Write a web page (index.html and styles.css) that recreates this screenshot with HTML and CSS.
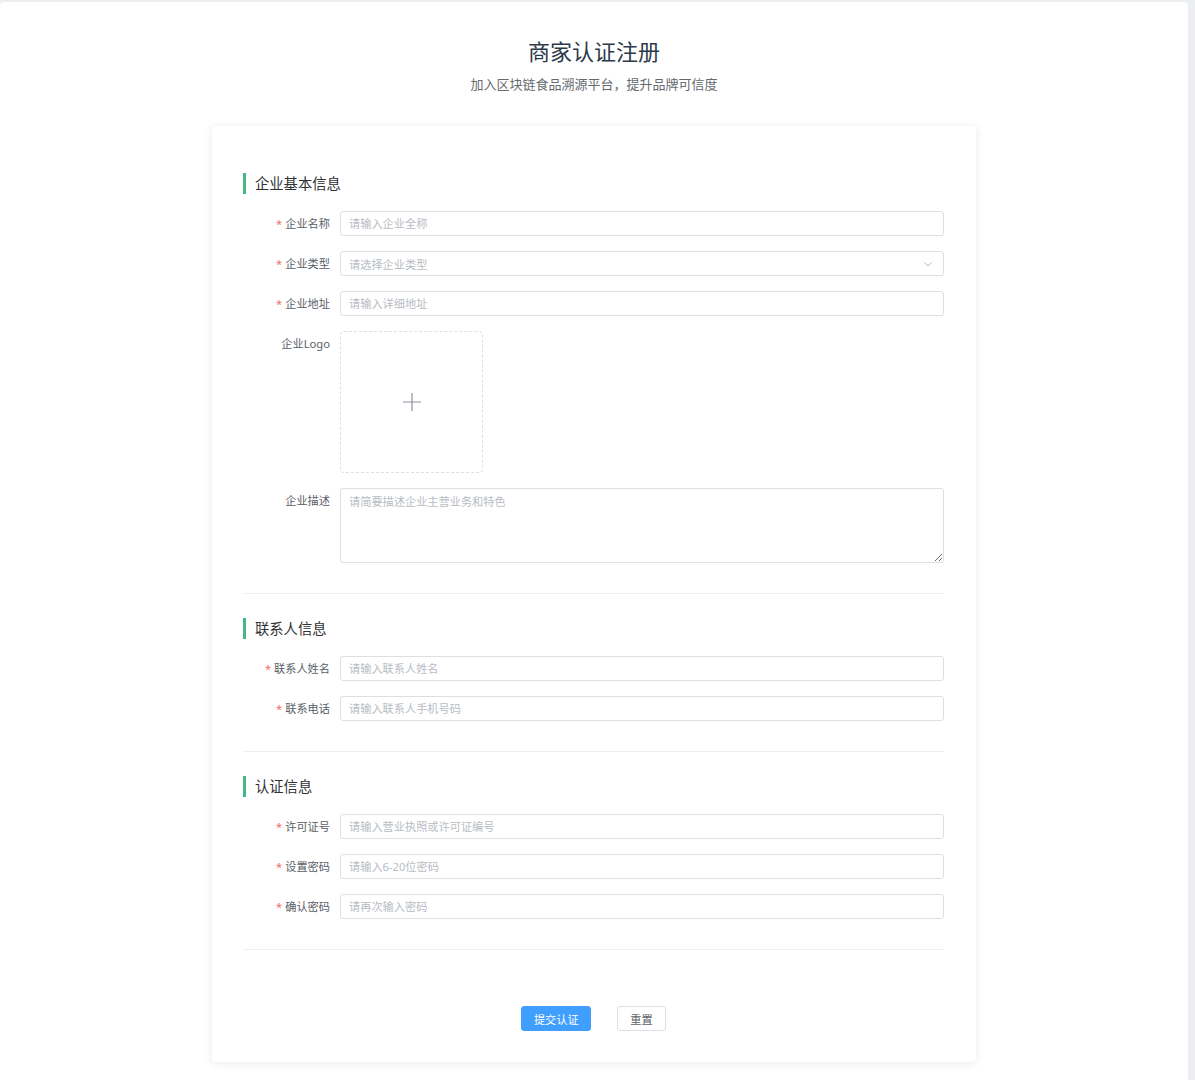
FILE: index.html
```html
<!DOCTYPE html>
<html lang="zh-CN">
<head>
  <meta charset="UTF-8" />
  <title>商家认证注册</title>
  <link rel="stylesheet" href="styles.css">
</head>
<body>

  <div class="page">
    <div class="header">
      <h1 class="title">商家认证注册</h1>
      <p class="subtitle">加入区块链食品溯源平台，提升品牌可信度</p>
    </div>

    <form class="card" onsubmit="return false;">
      <div class="section">
        <h3 class="section-title">企业基本信息</h3>
        <div class="row">
          <label class="label"><span class="req">*</span>企业名称</label>
          <input class="input" type="text" placeholder="请输入企业全称">
        </div>
        <div class="row">
          <label class="label"><span class="req">*</span>企业类型</label>
          <div class="select">
            <span class="select-text">请选择企业类型</span>
            <svg class="arrow" width="10" height="10" viewBox="0 0 10 10"><path d="M1.5 3.5 L5 7 L8.5 3.5" fill="none" stroke="#b4b8bf" stroke-width="1"/></svg>
          </div>
        </div>
        <div class="row">
          <label class="label"><span class="req">*</span>企业地址</label>
          <input class="input" type="text" placeholder="请输入详细地址">
        </div>
        <div class="row">
          <label class="label">企业Logo</label>
          <div class="upload">
            <svg width="20" height="20" viewBox="0 0 20 20"><path d="M10 1 V19 M1 10 H19" stroke="#8c939d" stroke-width="1.2"/></svg>
          </div>
        </div>
        <div class="row">
          <label class="label">企业描述</label>
          <textarea class="textarea" placeholder="请简要描述企业主营业务和特色"></textarea>
        </div>
      </div>

      <div class="section">
        <h3 class="section-title">联系人信息</h3>
        <div class="row">
          <label class="label"><span class="req">*</span>联系人姓名</label>
          <input class="input" type="text" placeholder="请输入联系人姓名">
        </div>
        <div class="row">
          <label class="label"><span class="req">*</span>联系电话</label>
          <input class="input" type="text" placeholder="请输入联系人手机号码">
        </div>
      </div>

      <div class="section">
        <h3 class="section-title">认证信息</h3>
        <div class="row">
          <label class="label"><span class="req">*</span>许可证号</label>
          <input class="input" type="text" placeholder="请输入营业执照或许可证编号">
        </div>
        <div class="row">
          <label class="label"><span class="req">*</span>设置密码</label>
          <input class="input" type="password" placeholder="请输入6-20位密码">
        </div>
        <div class="row">
          <label class="label"><span class="req">*</span>确认密码</label>
          <input class="input" type="password" placeholder="请再次输入密码">
        </div>
      </div>

      <div class="actions">
        <button class="btn btn-primary" type="submit">提交认证</button>
        <button class="btn" type="reset">重置</button>
      </div>
    </form>
  </div>

</body>
</html>
```

FILE: styles.css
```css
* { box-sizing: border-box; }
body {
  margin: 0; background: #eceef1;
  font-family: "Noto Sans", "Noto Sans CJK SC", sans-serif;
}
.page {
  margin: 2px 7px 0 0; min-height: 1078px;
  background: #fff; border-radius: 4px 4px 0 0;
  padding: 34px 0 18px;
}
.header { text-align: center; margin-bottom: 32px; }
.title {
  margin: 0; font-size: 22px; line-height: 30px; font-weight: 400;
  color: #2d3a4a;
}
.subtitle {
  margin: 8px 0 0; font-size: 13px; line-height: 20px; color: #666a70;
}
.card {
  width: 764px; margin: 0 auto; background: #fff;
  border-radius: 4px; box-shadow: 0 1px 10px rgba(0,0,0,0.09);
  padding: 47px 32px 31px 31px;
}
.section {
  border-bottom: 1px solid #edeef2; padding-bottom: 15px;
  margin-bottom: 24px;
}
.section:last-of-type { margin-bottom: 0; padding-bottom: 14px; }
.section-title {
  margin: 0 0 17px; height: 21px; line-height: 21px;
  border-left: 3px solid #42b983; padding-left: 9px;
  font-size: 14.3px; font-weight: 400; color: #303133;
}
.row { display: flex; align-items: flex-start; margin-bottom: 15px; }
.label {
  width: 97px; flex: none; padding-right: 10px; text-align: right;
  font-size: 11.2px; line-height: 25px; color: #5a5e66;
}
.req { color: #f56c6c; margin-right: 3px; }
.input, .select, .textarea {
  flex: 1; height: 25px; border: 1px solid #dcdfe6; border-radius: 3px;
  padding: 0 8px; font-family: inherit; font-size: 11.2px; color: #606266;
  background: #fff; outline: none;
}
.input::placeholder, .textarea::placeholder { color: #b8bcc3; }
.select {
  display: flex; align-items: center; justify-content: space-between;
  padding-right: 10px;
}
.select-text { color: #b8bcc3; }
.upload {
  width: 143px; height: 142px; border: 1px dashed #dcdfe6; border-radius: 4px;
  display: flex; justify-content: center; align-items: center;
}
.textarea {
  height: 75px; padding: 4px 8px; line-height: 18px; resize: vertical;
}
.actions {
  display: flex; justify-content: center; gap: 26px; margin-top: 56px;
}
.btn {
  height: 25px; padding: 0 12px; border: 1px solid #dcdfe6; border-radius: 3px;
  background: #fff; color: #606266; font-family: inherit; font-size: 11.2px;
  white-space: nowrap; cursor: pointer;
}
.btn-primary { width: 70px; padding: 0; background: #409eff; border-color: #409eff; color: #fff; }
```
